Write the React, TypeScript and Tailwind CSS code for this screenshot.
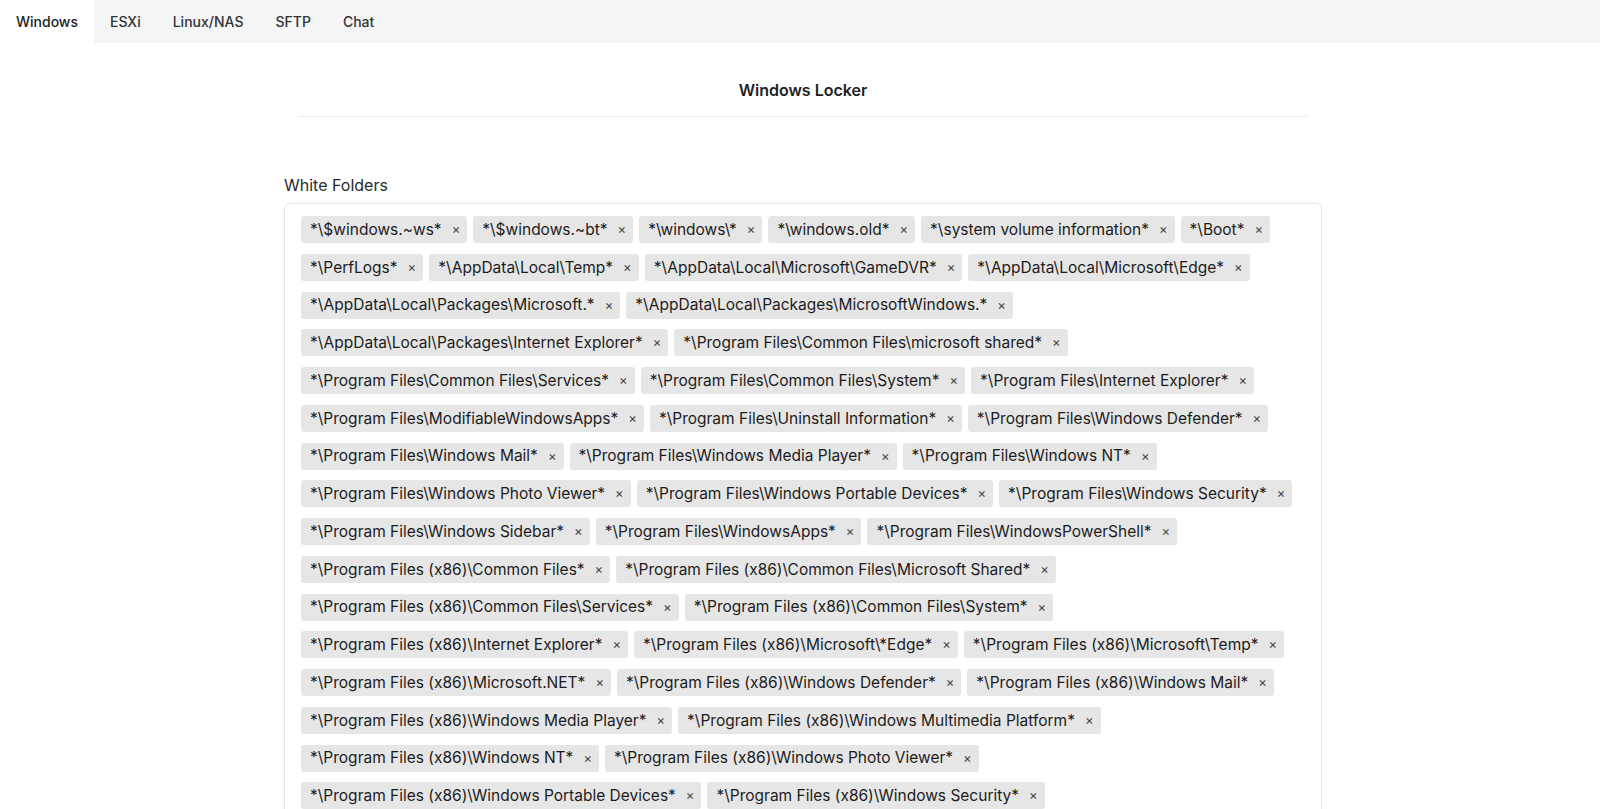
import React, { useState } from 'react';

const tabs = ['Windows', 'ESXi', 'Linux/NAS', 'SFTP', 'Chat'];

const initialFolders = [
  '*\\$windows.~ws*',
  '*\\$windows.~bt*',
  '*\\windows\\*',
  '*\\windows.old*',
  '*\\system volume information*',
  '*\\Boot*',
  '*\\PerfLogs*',
  '*\\AppData\\Local\\Temp*',
  '*\\AppData\\Local\\Microsoft\\GameDVR*',
  '*\\AppData\\Local\\Microsoft\\Edge*',
  '*\\AppData\\Local\\Packages\\Microsoft.*',
  '*\\AppData\\Local\\Packages\\MicrosoftWindows.*',
  '*\\AppData\\Local\\Packages\\Internet Explorer*',
  '*\\Program Files\\Common Files\\microsoft shared*',
  '*\\Program Files\\Common Files\\Services*',
  '*\\Program Files\\Common Files\\System*',
  '*\\Program Files\\Internet Explorer*',
  '*\\Program Files\\ModifiableWindowsApps*',
  '*\\Program Files\\Uninstall Information*',
  '*\\Program Files\\Windows Defender*',
  '*\\Program Files\\Windows Mail*',
  '*\\Program Files\\Windows Media Player*',
  '*\\Program Files\\Windows NT*',
  '*\\Program Files\\Windows Photo Viewer*',
  '*\\Program Files\\Windows Portable Devices*',
  '*\\Program Files\\Windows Security*',
  '*\\Program Files\\Windows Sidebar*',
  '*\\Program Files\\WindowsApps*',
  '*\\Program Files\\WindowsPowerShell*',
  '*\\Program Files (x86)\\Common Files*',
  '*\\Program Files (x86)\\Common Files\\Microsoft Shared*',
  '*\\Program Files (x86)\\Common Files\\Services*',
  '*\\Program Files (x86)\\Common Files\\System*',
  '*\\Program Files (x86)\\Internet Explorer*',
  '*\\Program Files (x86)\\Microsoft\\*Edge*',
  '*\\Program Files (x86)\\Microsoft\\Temp*',
  '*\\Program Files (x86)\\Microsoft.NET*',
  '*\\Program Files (x86)\\Windows Defender*',
  '*\\Program Files (x86)\\Windows Mail*',
  '*\\Program Files (x86)\\Windows Media Player*',
  '*\\Program Files (x86)\\Windows Multimedia Platform*',
  '*\\Program Files (x86)\\Windows NT*',
  '*\\Program Files (x86)\\Windows Photo Viewer*',
  '*\\Program Files (x86)\\Windows Portable Devices*',
  '*\\Program Files (x86)\\Windows Security*',
];

export default function App() {
  const [active, setActive] = useState('Windows');
  const [folders, setFolders] = useState(initialFolders);

  const removeFolder = (f: string) => setFolders((list) => list.filter((x) => x !== f));

  return (
    <div className="h-screen overflow-hidden bg-white font-['Inter',_'Liberation_Sans',_sans-serif] text-[#1f1f1f]">
      {/* верхние вкладки */}
      <div className="flex h-[43px] bg-[#f4f5f7]">
        {tabs.map((t) => (
          <button
            key={t}
            onClick={() => setActive(t)}
            className={`px-4 text-[14px] font-medium ${active === t ? 'bg-white text-[#222]' : 'text-[#333]'}`}
          >
            {t}
          </button>
        ))}
      </div>

      <div className="pl-[6px]">
        <div className="mx-auto w-[1038px]">
          <div className="mx-[15px] border-b border-[#eceef1] pt-[35px] pb-[14px] text-center text-[16px] font-semibold text-[#222]">
            Windows Locker
          </div>

          <div className="mt-[56px] mb-[6px] text-[16px] text-[#2a2a2a]">White Folders</div>

          <div className="flex flex-wrap gap-x-[6px] gap-y-[10.75px] rounded-md border border-[#e6e7eb] px-4 pt-[12px] pb-[11px]">
            {folders.map((f) => (
              <span
                key={f}
                className="flex h-[27px] items-center rounded-[3px] bg-[#e6e6e6] pl-[9px] pr-[7px] text-[15.5px] leading-none text-[#1c1c1c]"
              >
                {f}
                <button
                  onClick={() => removeFolder(f)}
                  className="ml-[10px] text-[13px] leading-none text-[#444]"
                >
                  ×
                </button>
              </span>
            ))}
          </div>
        </div>
      </div>
    </div>
  );
}
